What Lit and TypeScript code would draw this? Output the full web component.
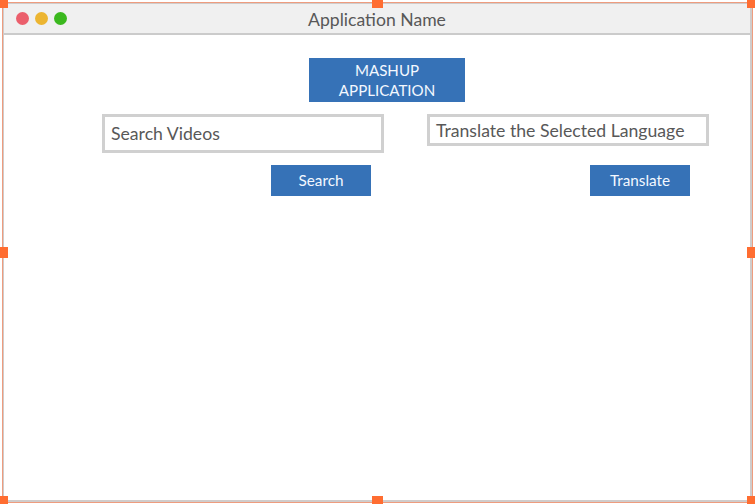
import { LitElement, html, css } from "lit";
import { customElement, property } from "lit/decorators.js";

@customElement("wire-button")
class WireButton extends LitElement {
  static styles = css`
    :host { display: block; }
    .button {
      width: 100px; height: 31px; box-sizing: border-box; padding: 0; margin: 0;
      border: 0; border-radius: 0; background: #3672b7; color: #f3f8ff;
      font: 15.3px/31px Lato, sans-serif; text-align: center; display: block;
    }
  `;
  render() {
    return html`<button class="button"><slot></slot></button>`;
  }
}

@customElement("wire-field")
class WireField extends LitElement {
  @property() label = "";
  static styles = css`
    :host { display: flex; box-sizing: border-box; align-items: center;
      border: 3px solid #d0d0d0; background: #fff; padding: 1px 0 0 6px;
      font: 17.65px/24px Lato, sans-serif; color: #585858; white-space: nowrap; }
  `;
  render() {
    return html`<span>${this.label}</span>`;
  }
}

@customElement("app-root")
class AppRoot extends LitElement {
  static styles = css`
    :host { display: block; position: relative; width: 755px; height: 504px;
      box-sizing: border-box; padding: 2px; background: #fff; overflow: hidden;
      font-family: Lato, sans-serif; }
    .selection { width: 751px; height: 501px; box-sizing: border-box; border: 1px solid #ee9c7e; }
    .window { height: 499px; box-sizing: border-box; border: 2px solid #d0cccb; border-left-width: 1px; border-top-width: 1px; }
    .bar { height: 31px; box-sizing: border-box; display: grid;
      grid-template-columns: 1fr auto 1fr; align-items: center;
      background: #f0f0f0; border-bottom: 2px solid #cbcbcb; }
    .dots { display: flex; gap: 6px; padding-left: 12px; }
    .dot { width: 13px; height: 13px; border-radius: 50%; }
    .red { background: #eb5f6c; }
    .yellow { background: #ecb531; }
    .green { background: #3bb81e; }
    .title { font-size: 17.6px; line-height: 24px; padding-top: 3px; color: #585858; }
    .content { display: flex; flex-direction: column; padding-top: 23px; }
    .banner { width: 156px; height: 44px; box-sizing: border-box; padding-top: 2px;
      margin-left: 305px; background: #3672b7; color: #f3f8ff;
      font-size: 15.1px; line-height: 20px; text-align: center; }
    .forms { display: flex; gap: 43px; margin: 12px 0 0 98px; }
    .form { width: 282px; height: 82px; display: flex; flex-direction: column; justify-content: space-between; align-items: flex-end; }
    .field { width: 282px; height: 39px; }
    .short { height: 32px; padding-top: 2px; }
    .search { margin-right: 13px; }
    .translate { margin-right: 19px; }
    .handle { position: absolute; width: 11px; height: 11px; background: #ff6d31; }
    .l { left: -3px; } .c { left: 372px; } .r { left: 747px; }
    .t { top: -3px; } .m { top: 247px; } .b { top: 496px; }
  `;
  render() {
    return html`
      <div class="selection">
        <div class="window">
          <header class="bar">
            <div class="dots">
              <span class="dot red"></span><span class="dot yellow"></span><span class="dot green"></span>
            </div>
            <div class="title">Application Name</div>
          </header>
          <main class="content">
            <div class="banner">MASHUP<br />APPLICATION</div>
            <div class="forms">
              <div class="form">
                <wire-field class="field" label="Search Videos"></wire-field>
                <wire-button class="search">Search</wire-button>
              </div>
              <div class="form">
                <wire-field class="field short" label="Translate the Selected Language"></wire-field>
                <wire-button class="translate">Translate</wire-button>
              </div>
            </div>
          </main>
        </div>
      </div>
      ${["l t", "c t", "r t", "l m", "r m", "l b", "c b", "r b"].map(
        (place) => html`<span class="handle ${place}"></span>`
      )}
    `;
  }
}
